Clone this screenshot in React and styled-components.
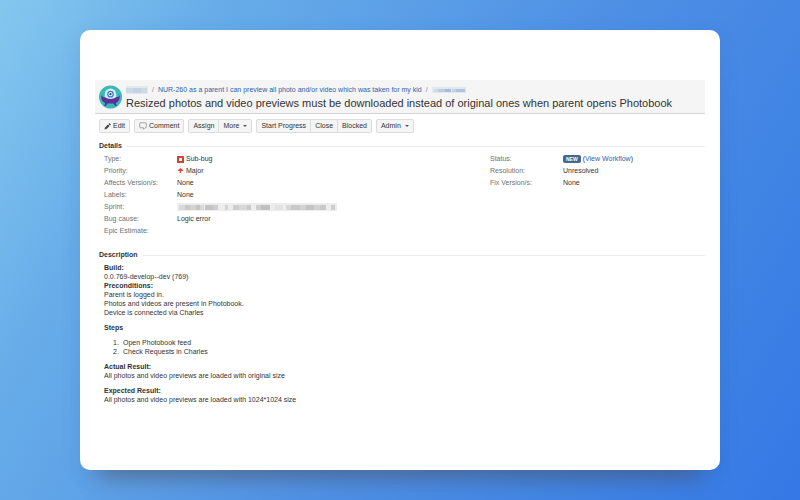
import React from 'react'
import styled, { createGlobalStyle } from 'styled-components';

const GlobalStyle = createGlobalStyle`
    * {
        box-sizing: border-box;
    }
    body {
        margin: 0;
        font-family: "Liberation Sans", Arial, sans-serif;
        font-size: 7px;
        line-height: 12px;
        color: #333;
    }
    svg {
        flex-shrink: 0;
    }
`
const Page = styled.div`
    min-height: 100vh;
    display: flex;
    padding: 30px 10%;
    background: linear-gradient(120deg, #84c8ef 0%, #68ade9 20%, #4f90e5 56%, #4084e4 80%, #3578e6 100%);
`
const Card = styled.main`
    flex: 1;
    min-width: 0;
    padding: 50px 15px;
    border-radius: 10px;
    background-color: white;
    box-shadow: 0 28px 20px -20px rgba(80, 75, 85, 0.5), 0 4px 20px rgba(40, 80, 150, 0.12);
`
const Header = styled.header`
    display: flex;
    align-items: center;
    gap: 4px;
    height: 34px;
    padding: 0 4px;
    background-color: #f5f5f5;
    border-bottom: 1px solid #d4d4d4;
`
const Heading = styled.div`
    padding-top: 3px;
`
const Breadcrumbs = styled.nav`
    display: flex;
    align-items: center;
    gap: 4px;
    height: 10px;
    color: #888;
`
const Link = styled.a`
    color: #2f62ac;
    text-decoration: none;
    &:hover{
        text-decoration: underline;
    }
`
const Title = styled.h1`
    margin: 0;
    font-size: 11px;
    line-height: 16px;
    font-weight: normal;
    white-space: nowrap;
`
const Toolbar = styled.div`
    display: flex;
    gap: 4px;
    padding: 5px 4px 7px;
`
const ButtonGroup = styled.div`
    display: flex;
`
const Button = styled.button`
    display: flex;
    align-items: center;
    gap: 2px;
    height: 14px;
    padding: 0 4px;
    border: 1px solid #dcdcdc;
    background-color: #f5f5f5;
    color: #333;
    font: inherit;
    cursor: pointer;

    &:first-child{
        border-radius: 2px 0 0 2px;
    }
    &:last-child{
        border-radius: 0 2px 2px 0;
    }
    &:only-child{
        border-radius: 2px;
    }
    & + &{
        margin-left: -1px;
    }
`
const Caret = styled.span`
    margin-left: 2px;
    border: 2px solid transparent;
    border-top-color: #555;
    border-bottom: none;
`
const SectionTitle = styled.h2`
    display: flex;
    align-items: center;
    gap: 5px;
    margin: 0;
    padding-left: 4px;
    font-size: 7px;
    line-height: 12px;

    &::after{
        content: '';
        flex: 1;
        border-top: 1px solid #ececec;
    }
`
const Details = styled.div`
    display: grid;
    grid-template-columns: 386fr 215fr;
    padding: 1px 0 12px 9px;
`
const Fields = styled.dl`
    margin: 0;
`
const Field = styled.div`
    display: flex;
    height: 12px;
`
const FieldName = styled.dt`
    width: 73px;
    color: #707070;
`
const FieldValue = styled.dd`
    display: flex;
    align-items: center;
    gap: 2px;
    margin: 0;
`
const Status = styled.span`
    padding: 0 3px;
    border-radius: 2px;
    background-color: #45688d;
    color: white;
    font-size: 5px;
    line-height: 8px;
    font-weight: bold;
`
const Description = styled.div`
    padding: 2px 9px;
    line-height: 9px;
`
const Paragraph = styled.p`
    margin: 0 0 6px;
`
const Steps = styled.ol`
    margin: 0 0 6px;
    padding-left: 9px;
    list-style: none;
    counter-reset: step;
`
const Step = styled.li`
    display: flex;
    counter-increment: step;

    &::before{
        content: counter(step) '.';
        width: 10px;
    }
`

function Redacted({ width, height, blocks, tint, label }) {
    return (
        <svg width={width} height={height} viewBox={`0 0 ${width} ${height}`} role="img" aria-label={label}>
            <rect width={width} height={height} fill={tint} opacity="0.15" />
            {blocks.map(([x, w, opacity]) => (
                <rect key={x} x={x} y="2" width={w} height={height - 3} fill={tint} opacity={opacity} />
            ))}
        </svg>
    )
}

function Avatar() {
    return (
        <svg width="23" height="24" viewBox="0 0 24 24">
            <circle cx="12" cy="12" r="12" fill="#3db8b8" />
            <path d="M6 14V9.500a6 6.500 0 0 1 12 0V14z" fill="#dcecf6" />
            <path d="M2.500 10c1 2.500 3 2.500 4.500 2.500 2 2 8 2 10 0 1.500 0 3.500 0 4.500-2.500.5 5-1.500 7.500-4 8.200l1 3.300h-1.500l-2-2.700H9l-2 2.700H5.500l1-3.300c-2.500-.7-4.500-3.200-4-8.200z" fill="#5b3099" />
            <circle cx="12" cy="9" r="3.500" fill="#3184c4" />
            <circle cx="12" cy="9" r="2.100" fill="white" />
            <circle cx="12" cy="9" r="1.200" fill="#25467d" />
        </svg>
    )
}

function PencilIcon() {
    return (
        <svg width="7" height="7" viewBox="0 0 14 14">
            <path d="M1 13l1-4 6-6 3 3-6 6zM9 2l1.500-1.500q.5-.5 1 0l2 2q.5.500 0 1L12 5z" fill="#444" />
        </svg>
    )
}

function CommentIcon() {
    return (
        <svg width="8" height="8" viewBox="0 0 16 16">
            <path d="M3 1.500h10q1.500 0 1.500 1.500v7q0 1.500-1.500 1.500h-1l-3 3v-3H3Q1.500 11.500 1.500 10V3Q1.500 1.500 3 1.500z" fill="none" stroke="#888" strokeWidth="1.500" />
        </svg>
    )
}

function BugIcon() {
    return (
        <svg width="7" height="7" viewBox="0 0 14 14">
            <rect width="14" height="14" rx="1" fill="#d04437" />
            <rect x="4" y="4" width="6" height="6" rx="1" fill="white" />
        </svg>
    )
}

function MajorIcon() {
    return (
        <svg width="7" height="7" viewBox="0 0 14 14">
            <path d="M7 0l5 4v2H8.500v4h-3V6H2V4z" fill="#d95045" />
        </svg>
    )
}

const sprintBlocks = [
    [2, 6, 0.2], [8, 5, 0.35], [13, 6, 0.25], [19, 4, 0.4], [23, 4, 0.2],
    [28, 8, 0.4], [36, 5, 0.3], [48, 3, 0.25], [56, 6, 0.3], [62, 8, 0.2],
    [70, 4, 0.35], [79, 5, 0.3], [84, 9, 0.45], [98, 8, 0.1], [109, 5, 0.2],
    [114, 9, 0.35], [123, 6, 0.25], [129, 8, 0.4], [137, 6, 0.25], [143, 6, 0.35], [154, 4, 0.3],
]

const leftFields = [
    { name: 'Type:', value: <><BugIcon />Sub-bug</> },
    { name: 'Priority:', value: <><MajorIcon />Major</> },
    { name: 'Affects Version/s:', value: 'None' },
    { name: 'Labels:', value: 'None' },
    { name: 'Sprint:', value: <Redacted width={160} height={8} blocks={sprintBlocks} tint="#888" label="Sprint" /> },
    { name: 'Bug cause:', value: 'Logic error' },
    { name: 'Epic Estimate:', value: '' },
]

const rightFields = [
    { name: 'Status:', value: <><Status>NEW</Status><span>(<Link href="#">View Workflow</Link>)</span></> },
    { name: 'Resolution:', value: 'Unresolved' },
    { name: 'Fix Version/s:', value: 'None' },
]

function FieldList({ fields }) {
    return (
        <Fields>
            {fields.map((field) => (
                <Field key={field.name}>
                    <FieldName>{field.name}</FieldName>
                    <FieldValue>{field.value}</FieldValue>
                </Field>
            ))}
        </Fields>
    )
}

function App() {
    return (
        <Page>
            <GlobalStyle />
            <Card>
                <Header>
                    <Avatar />
                    <Heading>
                        <Breadcrumbs>
                            <Redacted width={22} height={8} blocks={[[0, 7, 0.2], [7, 8, 0.3], [15, 6, 0.2]]} tint="#7f9fce" label="Project" />
                            <span>/</span>
                            <Link href="#">NUR-260 as a parent I can preview all photo and/or video which was taken for my kid</Link>
                            <span>/</span>
                            <Redacted width={34} height={6} blocks={[[2, 4, 0.2], [6, 7, 0.4], [13, 6, 0.6], [20, 4, 0.3], [24, 9, 0.5]]} tint="#7f9fce" label="Issue" />
                        </Breadcrumbs>
                        <Title>Resized photos and video previews must be downloaded instead of original ones when parent opens Photobook</Title>
                    </Heading>
                </Header>
                <Toolbar>
                    <ButtonGroup>
                        <Button><PencilIcon />Edit</Button>
                    </ButtonGroup>
                    <ButtonGroup>
                        <Button><CommentIcon />Comment</Button>
                    </ButtonGroup>
                    <ButtonGroup>
                        <Button>Assign</Button>
                        <Button>More<Caret /></Button>
                    </ButtonGroup>
                    <ButtonGroup>
                        <Button>Start Progress</Button>
                        <Button>Close</Button>
                        <Button>Blocked</Button>
                    </ButtonGroup>
                    <ButtonGroup>
                        <Button>Admin<Caret /></Button>
                    </ButtonGroup>
                </Toolbar>

                <SectionTitle>Details</SectionTitle>
                <Details>
                    <FieldList fields={leftFields} />
                    <FieldList fields={rightFields} />
                </Details>

                <SectionTitle>Description</SectionTitle>
                <Description>
                    <Paragraph>
                        <b>Build:</b><br />
                        0.0.769-develop--dev (769)<br />
                        <b>Preconditions:</b><br />
                        Parent is logged in.<br />
                        Photos and videos are present in Photobook.<br />
                        Device is connected via Charles
                    </Paragraph>
                    <Paragraph><b>Steps</b></Paragraph>
                    <Steps>
                        <Step>Open Photobook feed</Step>
                        <Step>Check Requests in Charles</Step>
                    </Steps>
                    <Paragraph>
                        <b>Actual Result:</b><br />
                        All photos and video previews are loaded with original size
                    </Paragraph>
                    <Paragraph>
                        <b>Expected Result:</b><br />
                        All photos and video previews are loaded with 1024*1024 size
                    </Paragraph>
                </Description>
            </Card>
        </Page>
    )
}

export default App
